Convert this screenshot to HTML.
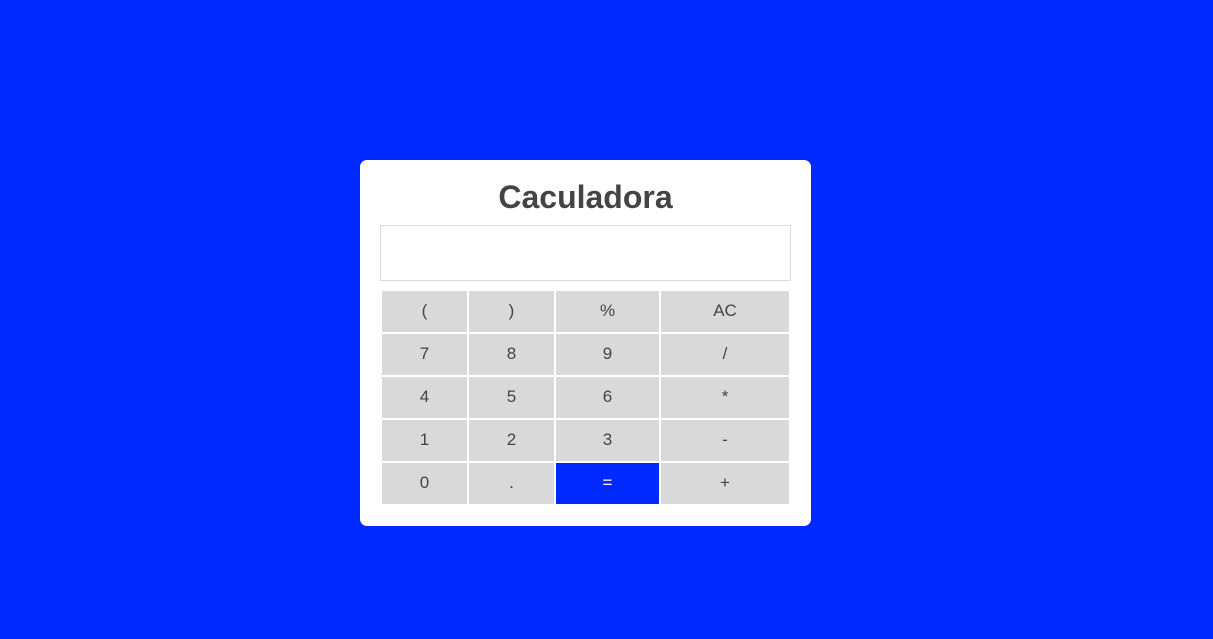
<!DOCTYPE html>
<html><head><style>
body{margin:0;width:1213px;height:639px;background:#0029ff;font-family:"Liberation Sans",Arial,sans-serif;position:relative;overflow:hidden}
.card{position:absolute;left:360px;top:160px;width:451px;height:366px;background:#fff;border-radius:7px}
h1{position:absolute;left:0;width:451px;top:179px;margin:0;text-align:center;font-size:32px;font-weight:bold;color:#444;line-height:36px}
.inp{position:absolute;left:380px;top:225px;width:409px;height:54px;border:1px solid #d9d9d9;background:#fff}
.b{position:absolute;background:#d9d9d9;color:#444;font-size:17px;display:flex;align-items:center;justify-content:center;padding-bottom:1px;box-sizing:border-box}
.eq{background:#0029ff;color:#fff}
</style></head><body>
<div class="card"></div>
<h1 style="left:360px">Caculadora</h1>
<div class="inp"></div>
<div id="g"></div>
<script>
var cols=[[382,85],[469,85],[556,103],[661,128]],rows=[291,334,377,420,463];
var L=[["(",")","%","AC"],["7","8","9","/"],["4","5","6","*"],["1","2","3","-"],["0",".","=","+"]];
var h="";for(var r=0;r<5;r++)for(var c=0;c<4;c++){h+='<div class="b'+(L[r][c]=="="?" eq":"")+'" style="left:'+cols[c][0]+'px;top:'+rows[r]+'px;width:'+cols[c][1]+'px;height:41px">'+L[r][c]+'</div>';}
document.getElementById("g").innerHTML=h;
</script>
</body></html>
